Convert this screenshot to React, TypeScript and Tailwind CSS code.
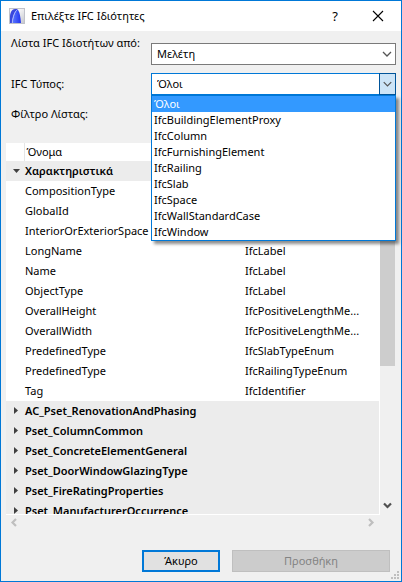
import React, { useState } from 'react';
import clsx from 'clsx';

interface PropertyRow {
  name: string;
  type?: string;
}

const SOURCES = ['Μελέτη'];

const IFC_TYPES = [
  'Όλοι',
  'IfcBuildingElementProxy',
  'IfcColumn',
  'IfcFurnishingElement',
  'IfcRailing',
  'IfcSlab',
  'IfcSpace',
  'IfcWallStandardCase',
  'IfcWindow',
];

const ATTRIBUTES: PropertyRow[] = [
  { name: 'CompositionType' },
  { name: 'GlobalId' },
  { name: 'InteriorOrExteriorSpace' },
  { name: 'LongName', type: 'IfcLabel' },
  { name: 'Name', type: 'IfcLabel' },
  { name: 'ObjectType', type: 'IfcLabel' },
  { name: 'OverallHeight', type: 'IfcPositiveLengthMe...' },
  { name: 'OverallWidth', type: 'IfcPositiveLengthMe...' },
  { name: 'PredefinedType', type: 'IfcSlabTypeEnum' },
  { name: 'PredefinedType', type: 'IfcRailingTypeEnum' },
  { name: 'Tag', type: 'IfcIdentifier' },
];

const PROPERTY_SETS = [
  'AC_Pset_RenovationAndPhasing',
  'Pset_ColumnCommon',
  'Pset_ConcreteElementGeneral',
  'Pset_DoorWindowGlazingType',
  'Pset_FireRatingProperties',
  'Pset_ManufacturerOccurrence',
];

const AppLogo = () => (
  <svg className="w-4 h-4" viewBox="0 0 16 16" aria-hidden="true">
    <defs>
      <linearGradient id="logo-bg" x1="0" y1="0" x2="1" y2="1">
        <stop offset="0.4" stopColor="#f4f4f6" />
        <stop offset="1" stopColor="#c4c6cc" />
      </linearGradient>
      <linearGradient id="logo-arc" x1="0" y1="0" x2="1" y2="0">
        <stop offset="0" stopColor="#5a78ff" />
        <stop offset="1" stopColor="#2233ee" />
      </linearGradient>
    </defs>
    <rect x="0.5" y="0.5" width="15" height="15" fill="url(#logo-bg)" stroke="#c0c2ca" />
    <path d="M1 15V8C1.500 4 3 1 6 1H9C5.500 3 3.500 9 3.200 15Z" fill="#3a48dd" />
    <path d="M3.500 15C4 9 6 3.500 8.500 1.500C10.500 3 11.500 9 12 15Z" fill="url(#logo-arc)" />
    <path d="M3.300 15C3.700 9 5.700 3.500 8.500 1.500" fill="none" stroke="#a9b8ff" strokeWidth="0.800" />
  </svg>
);

const SelectChevron = () => (
  <svg className="w-4 h-4" viewBox="0 0 16 16" fill="none" stroke="#555555" strokeWidth="1.300" aria-hidden="true">
    <path d="M4 6L8 10L12 6" />
  </svg>
);

const ScrollChevron = ({ d, color }: { d: string; color: string }) => (
  <svg className="w-4 h-4" viewBox="0 0 16 16" fill="none" stroke={color} strokeWidth="2.200" aria-hidden="true">
    <path d={d} />
  </svg>
);

const Disclosure = ({ open }: { open: boolean }) => (
  <svg className="w-2 h-2 ml-2 overflow-visible" viewBox="0 0 8 8" fill="#404040" aria-hidden="true">
    <path d={open ? 'M-1 2H6L2.500 6Z' : 'M0 0V7L4 3.500Z'} />
  </svg>
);

interface GroupRowProps {
  title: string;
  open: boolean;
  onToggle: () => void;
}

const GroupRow: React.FC<GroupRowProps> = ({ title, open, onToggle }) => (
  <tr className="h-5 bg-[#ececec] font-semibold">
    <td className="p-0">
      <button type="button" aria-label={title} className="flex items-center w-full h-5" onClick={onToggle}>
        <Disclosure open={open} />
      </button>
    </td>
    <td colSpan={2} className="p-0 pl-px">{title}</td>
  </tr>
);

export default function App() {
  const [ifcType, setIfcType] = useState('Όλοι');
  const [listOpen, setListOpen] = useState(true);
  const [attributesOpen, setAttributesOpen] = useState(true);

  return (
    <div className="flex flex-col h-screen border border-[#0078d7] bg-[#f0f0f0] text-black font-['Noto_Sans','Open_Sans',sans-serif] text-[11px] leading-4">
      {/* Title bar */}
      <header className="flex items-center h-[30px] pl-2 pr-4 bg-white shrink-0">
        <AppLogo />
        <h1 className="ml-1.5 flex-1">Επιλέξτε IFC Ιδιότητες</h1>
        <button type="button" aria-label="Βοήθεια" className="w-5 text-[13px]">?</button>
        <button type="button" aria-label="Κλείσιμο" className="ml-6">
          <svg className="w-4 h-4" viewBox="0 0 16 16" stroke="#000000" strokeWidth="1.100" aria-hidden="true">
            <path d="M4 3L14 13M14 3L4 13" />
          </svg>
        </button>
      </header>

      {/* Filters */}
      <div className="grid grid-cols-[140px_1fr] gap-y-2 pt-1 pl-2.5 pr-[5px] shrink-0">
        <label htmlFor="source" className="whitespace-nowrap">Λίστα IFC Ιδιοτήτων από:</label>
        <div className="relative mt-2">
          <select id="source" className="block w-full h-[22px] pl-[5px] appearance-none bg-white border border-[#7a7a7a]">
            {SOURCES.map((source) => (
              <option key={source}>{source}</option>
            ))}
          </select>
          <span className="absolute right-0 inset-y-0 w-[17px] flex items-center pointer-events-none">
            <SelectChevron />
          </span>
        </div>

        <label htmlFor="ifc-type" className="self-center">IFC Τύπος:</label>
        <div className="relative">
          <select
            id="ifc-type"
            value={ifcType}
            onChange={(e) => setIfcType(e.target.value)}
            onClick={() => setListOpen(!listOpen)}
            className="block w-full h-[22px] pl-[5px] appearance-none bg-white border border-[#0078d7]"
          >
            {IFC_TYPES.map((type) => (
              <option key={type}>{type}</option>
            ))}
          </select>
          <span className="absolute right-0 inset-y-0 w-[17px] flex items-center justify-center bg-[#cce4f7] border border-[#005499] pointer-events-none">
            <SelectChevron />
          </span>
          {listOpen && (
            <ul
              role="listbox"
              aria-label="IFC Τύπος"
              className="absolute z-10 top-full inset-x-0 bg-white border border-[#0078d7] shadow-[3px_3px_3px_rgba(0,0,0,0.45)]"
            >
              {IFC_TYPES.map((type) => (
                <li
                  key={type}
                  role="option"
                  aria-selected={type === ifcType}
                  onClick={() => {
                    setIfcType(type);
                    setListOpen(false);
                  }}
                  className={clsx('h-4 pl-0.5', type === ifcType && 'bg-[#3399ff] text-white')}
                >
                  {type}
                </li>
              ))}
            </ul>
          )}
        </div>

        <label htmlFor="filter" className="self-center">Φίλτρο Λίστας:</label>
        <input id="filter" type="text" className="w-full h-[22px] px-1 bg-white border border-[#7a7a7a]" />
      </div>

      {/* Property list */}
      <div className="flex flex-1 min-h-0 mt-[18px] ml-[5px] mr-1.5">
        <div className="flex-1 min-w-0 overflow-hidden bg-white border-r border-b border-white">
          <table className="w-full table-fixed border-collapse text-left whitespace-nowrap">
            <colgroup>
              <col className="w-[18px]" />
              <col className="w-[220px]" />
              <col />
            </colgroup>
            <thead>
              <tr className="h-[18px]">
                <td className="p-0 border-r border-[#e5e5e5]" />
                <th className="p-0 pl-0.5 font-normal" colSpan={2}>Όνομα</th>
              </tr>
            </thead>
            <tbody>
              <GroupRow
                title="Χαρακτηριστικά"
                open={attributesOpen}
                onToggle={() => setAttributesOpen(!attributesOpen)}
              />
              {attributesOpen &&
                ATTRIBUTES.map((row, i) => (
                  <tr key={i} className="h-5">
                    <td className="p-0" />
                    <td className="p-0 pl-px">{row.name}</td>
                    <td className="p-0 pl-px">{row.type}</td>
                  </tr>
                ))}
              {PROPERTY_SETS.map((set) => (
                <GroupRow key={set} title={set} open={false} onToggle={() => {}} />
              ))}
            </tbody>
          </table>
        </div>
        {/* Vertical scrollbar */}
        <div className="flex flex-col w-[15px]">
          <div className="h-[60%] bg-[#cdcdcd]" />
          <div className="mt-auto">
            <ScrollChevron d="M4 4.500L7.500 8L11 4.500" color="#505050" />
          </div>
        </div>
      </div>

      {/* Horizontal scrollbar */}
      <div className="flex items-center justify-between h-4 pl-[5px] pr-[22px] shrink-0">
        <ScrollChevron d="M10 4L6.500 7.500L10 11" color="#bfbfbf" />
        <ScrollChevron d="M6 4L9.500 7.500L6 11" color="#bfbfbf" />
      </div>

      <footer className="relative flex justify-end gap-3 pt-[19px] pb-[9px] pr-[11px] shrink-0">
        <button type="button" className="w-[78px] h-[22px] bg-[#e1e1e1] border-2 border-[#0078d7]">
          Άκυρο
        </button>
        <button type="button" disabled className="w-[158px] h-[22px] bg-[#cccccc] border border-[#bfbfbf] text-[#838383]">
          Προσθήκη
        </button>
        <svg className="absolute right-0.5 bottom-0.5 w-2 h-2" viewBox="0 0 8 8" fill="#bfbfbf" aria-hidden="true">
          <path d="M6 0h2v2H6zM3 3h2v2H3zM6 3h2v2H6zM0 6h2v2H0zM3 6h2v2H3zM6 6h2v2H6z" />
        </svg>
      </footer>
    </div>
  );
}
